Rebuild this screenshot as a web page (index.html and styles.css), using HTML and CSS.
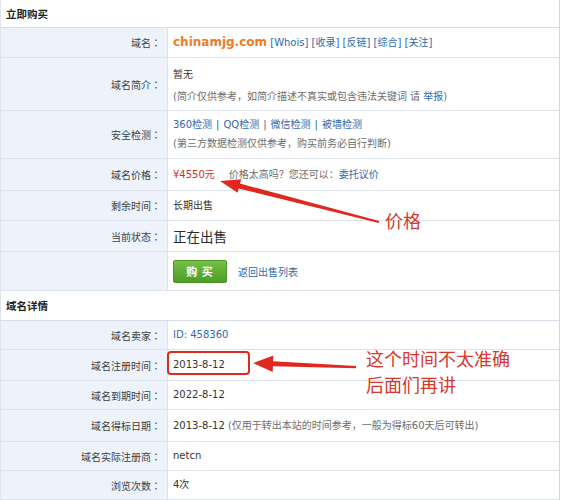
FILE: index.html
```html
<!DOCTYPE html>
<html lang="zh-CN">
<head>
<meta charset="utf-8">
<title>域名详情</title>
<link rel="stylesheet" href="styles.css">
</head>
<body>
<div class="page">
  <div class="panel">
    <div class="head">立即购买</div>
    <div class="row">
      <div class="lab">域名<span class="pc">：</span></div>
      <div class="val"><div class="line"><span class="domain">chinamjg.com</span> <span class="lk">[Whois]</span> <span class="lk">[收录]</span> <span class="lk">[反链]</span> <span class="lk">[综合]</span> <span class="lk">[关注]</span></div></div>
    </div>
    <div class="row desc">
      <div class="lab">域名简介<span class="pc">：</span></div>
      <div class="val">
        <div class="line">暂无</div>
        <div class="line note-text gap">(简介仅供参考<span class="pc">，</span>如简介描述不真实或包含违法关键词 请 <span class="lk">举报</span>)</div>
      </div>
    </div>
    <div class="row check">
      <div class="lab">安全检测<span class="pc">：</span></div>
      <div class="val">
        <div class="line"><span class="lk">360检测</span><span class="sep">|</span><span class="lk">QQ检测</span><span class="sep">|</span><span class="lk">微信检测</span><span class="sep">|</span><span class="lk">被墙检测</span></div>
        <div class="line note-text">(第三方数据检测仅供参考<span class="pc">，</span>购买前务必自行判断)</div>
      </div>
    </div>
    <div class="row s32">
      <div class="lab">域名价格<span class="pc">：</span></div>
      <div class="val"><div class="line"><span class="price">¥4550元</span><span class="note-text ask">价格太高吗<span class="pc">？</span>您还可以<span class="pc">：</span></span><span class="lk">委托议价</span></div></div>
    </div>
    <div class="row">
      <div class="lab">剩余时间<span class="pc">：</span></div>
      <div class="val"><div class="line">长期出售</div></div>
    </div>
    <div class="row s31">
      <div class="lab">当前状态<span class="pc">：</span></div>
      <div class="val"><div class="line status">正在出售</div></div>
    </div>
    <div class="row buy">
      <div class="lab"></div>
      <div class="val inline"><span class="btn">购 买</span><span class="lk back">返回出售列表</span></div>
    </div>
    <div class="head second">域名详情</div>
    <div class="row s29">
      <div class="lab">域名卖家<span class="pc">：</span></div>
      <div class="val"><div class="line"><span class="lk">ID: 458360</span></div></div>
    </div>
    <div class="row s31">
      <div class="lab">域名注册时间<span class="pc">：</span></div>
      <div class="val"><div class="line">2013-8-12</div></div>
    </div>
    <div class="row s29">
      <div class="lab">域名到期时间<span class="pc">：</span></div>
      <div class="val"><div class="line">2022-8-12</div></div>
    </div>
    <div class="row s32">
      <div class="lab">域名得标日期<span class="pc">：</span></div>
      <div class="val"><div class="line">2013-8-12 <span class="note-text">(仅用于转出本站的时间参考<span class="pc">，</span>一般为得标60天后可转出)</span></div></div>
    </div>
    <div class="row s29">
      <div class="lab">域名实际注册商<span class="pc">：</span></div>
      <div class="val"><div class="line">netcn</div></div>
    </div>
    <div class="row s29">
      <div class="lab">浏览次数<span class="pc">：</span></div>
      <div class="val"><div class="line">4次</div></div>
    </div>
  </div>

  <svg class="marks" width="562" height="500" viewBox="0 0 562 500">
    <polygon class="arrow" points="220,181 241.2,179.2 240,183.6 379.2,221 378.8,223 238.8,188.4 237.6,192.8"/>
    <rect class="box" x="168" y="352" width="81" height="22" rx="3" ry="3"/>
    <polygon class="arrow" points="253,363 273.3,355.6 273.1,361.3 356,366 356,368.2 272.9,366.3 272.7,372"/>
  </svg>
  <div class="note n1">价格</div>
  <div class="note n2">这个时间不太准确<br>后面们再讲</div>
</div>
</body>
</html>
```

FILE: styles.css
```css
* {
  box-sizing: border-box;
  margin: 0;
  padding: 0;
}

body {
  margin: 0;
  background: #ffffff;
  font-family: "DejaVu Sans", "Noto Sans CJK SC", sans-serif;
  font-size: 10px;
  color: #333333;
}

.page {
  position: relative;
  width: 562px;
  height: 500px;
  overflow: hidden;
}

.panel {
  width: 560px;
  border-left: 1px solid #dfe5ec;
  border-right: 1px solid #d2d8e0;
}

.head {
  height: 28px;
  display: flex;
  align-items: center;
  padding-left: 5px;
  font-family: "Noto Sans CJK SC", sans-serif;
  font-weight: bold;
  font-size: 10.5px;
  color: #222222;
  border-bottom: 1px solid #d6dde6;
}

.head.second {
  height: 30px;
}

.row {
  display: grid;
  grid-template-columns: 167px 1fr;
  height: 30px;
  border-bottom: 1px solid #dde3ea;
}

.row.s29 { height: 29px; }
.row.s31 { height: 31px; }
.row.s32 { height: 32px; }
.row.desc { height: 53px; }
.row.check { height: 48px; }
.row.buy { height: 39px; }

.lab {
  background: #eef3fb;
  border-right: 1px solid #dbe2ea;
  display: flex;
  align-items: center;
  justify-content: flex-end;
  padding-right: 6px;
  color: #404040;
  font-family: "Noto Sans CJK SC", sans-serif;
}

.pc {
  font-family: "Noto Sans CJK TC", "Noto Sans CJK SC", sans-serif;
}

.val {
  display: flex;
  flex-direction: column;
  justify-content: center;
  padding-left: 5px;
  white-space: nowrap;
}

.val.inline {
  flex-direction: row;
  align-items: center;
  justify-content: flex-start;
}

.line {
  line-height: 18px;
}

.desc .val {
  padding-top: 3px;
}

.line.gap {
  margin-top: 3px;
}

.domain {
  font-weight: bold;
  font-size: 12px;
  color: #ee7b24;
}

.lk {
  color: #3169ad;
}

.sep {
  color: #3d5f8e;
  margin: 0 4px;
}

.note-text {
  color: #6e6e6e;
}

.price {
  color: #c9311f;
}

.ask {
  margin-left: 14px;
}

.status {
  font-family: "Noto Sans CJK SC", sans-serif;
  font-size: 13.5px;
  color: #2a2a2a;
}

.btn {
  width: 54px;
  height: 23px;
  display: flex;
  align-items: center;
  justify-content: center;
  background: linear-gradient(#74c044, #4f9c27);
  border: 1px solid #4b9324;
  border-radius: 2px;
  color: #ffffff;
  font-family: "Noto Sans CJK SC", sans-serif;
  font-weight: bold;
  font-size: 11px;
  letter-spacing: 1px;
}

.back {
  margin-left: 11px;
}

.marks {
  position: absolute;
  left: 0;
  top: 0;
  pointer-events: none;
}

.arrow {
  fill: #e0281f;
}

.box {
  fill: none;
  stroke: #dc2a20;
  stroke-width: 2;
}

.note {
  position: absolute;
  color: #d8372c;
  font-family: "Noto Sans CJK SC", sans-serif;
  font-size: 18px;
  line-height: 18px;
  white-space: nowrap;
}

.n1 {
  left: 385px;
  top: 211px;
}

.n2 {
  left: 366px;
  top: 345px;
  line-height: 26px;
}
```
